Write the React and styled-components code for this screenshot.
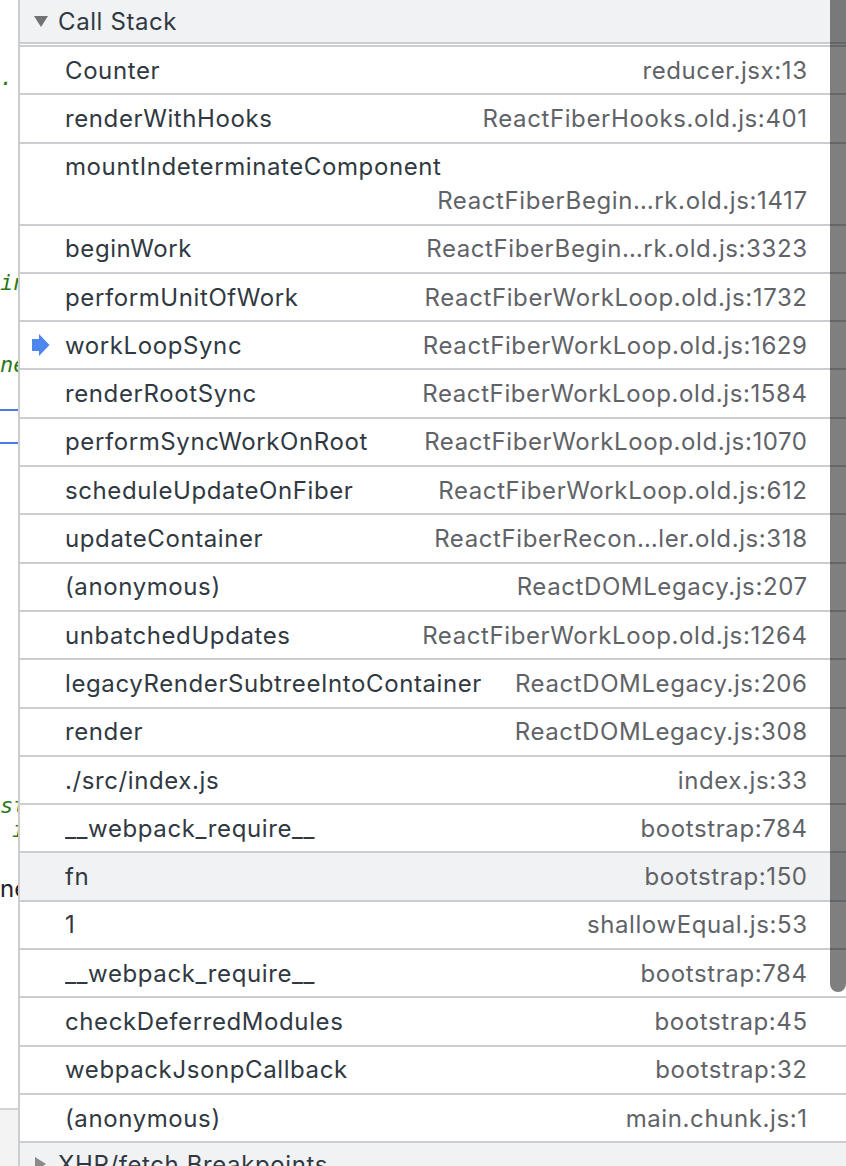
import styled, { createGlobalStyle } from 'styled-components';

const GlobalStyle = createGlobalStyle`
  html, body {
    margin: 0;
    padding: 0;
    background: #ffffff;
    overflow: hidden;
  }
  body {
    font-family: Inter, "Liberation Sans", sans-serif;
  }
`;

const frames = [
  { name: 'Counter', loc: 'reducer.jsx:13' },
  { name: 'renderWithHooks', loc: 'ReactFiberHooks.old.js:401' },
  { name: 'mountIndeterminateComponent', loc: 'ReactFiberBegin…rk.old.js:1417', stacked: true },
  { name: 'beginWork', loc: 'ReactFiberBegin…rk.old.js:3323' },
  { name: 'performUnitOfWork', loc: 'ReactFiberWorkLoop.old.js:1732' },
  { name: 'workLoopSync', loc: 'ReactFiberWorkLoop.old.js:1629', current: true },
  { name: 'renderRootSync', loc: 'ReactFiberWorkLoop.old.js:1584' },
  { name: 'performSyncWorkOnRoot', loc: 'ReactFiberWorkLoop.old.js:1070' },
  { name: 'scheduleUpdateOnFiber', loc: 'ReactFiberWorkLoop.old.js:612' },
  { name: 'updateContainer', loc: 'ReactFiberRecon…ler.old.js:318' },
  { name: '(anonymous)', loc: 'ReactDOMLegacy.js:207' },
  { name: 'unbatchedUpdates', loc: 'ReactFiberWorkLoop.old.js:1264' },
  { name: 'legacyRenderSubtreeIntoContainer', loc: 'ReactDOMLegacy.js:206' },
  { name: 'render', loc: 'ReactDOMLegacy.js:308' },
  { name: './src/index.js', loc: 'index.js:33' },
  { name: '__webpack_require__', loc: 'bootstrap:784' },
  { name: 'fn', loc: 'bootstrap:150', selected: true },
  { name: '1', loc: 'shallowEqual.js:53' },
  { name: '__webpack_require__', loc: 'bootstrap:784' },
  { name: 'checkDeferredModules', loc: 'bootstrap:45' },
  { name: 'webpackJsonpCallback', loc: 'bootstrap:32' },
  { name: '(anonymous)', loc: 'main.chunk.js:1' },
];

// bits of the source editor peeking out left of the sidebar
const gutterLines = [
  { h: 66 },
  { h: 24, text: '.', tone: 'green' },
  { h: 180 },
  { h: 26, text: 'in', tone: 'green' },
  { h: 56 },
  { h: 26, text: 'ne', tone: 'green' },
  { h: 31 },
  { rule: true },
  { h: 31 },
  { rule: true },
  { h: 350 },
  { h: 24, text: 'st', tone: 'green' },
  { h: 24, text: 'i', tone: 'green', indent: 12 },
  { h: 34 },
  { h: 26, text: 'ne', tone: 'plain' },
];

const CurrentArrow = () => (
  <svg width="18" height="22" viewBox="0 0 18 22">
    <polygon points="0,5 7,5 7,0 17.5,11 7,22 7,17 0,17" fill="#4d86ee" />
  </svg>
);

const Caret = ({ open }) => (
  <svg width="14" height="14" viewBox="0 0 14 14">
    {open ? (
      <polygon points="0,2 14,2 7,13" fill="#727272" />
    ) : (
      <polygon points="1,0 12,7 1,14" fill="#8a8a8a" />
    )}
  </svg>
);

const App = () => {
  return (
    <>
      <GlobalStyle />
      <Page>
        <Gutter>
          {gutterLines.map((line, i) =>
            line.rule ? (
              <BlueRule key={i} />
            ) : (
              <CodeLine key={i} $h={line.h} $tone={line.tone} $indent={line.indent}>
                {line.text}
              </CodeLine>
            )
          )}
          <GutterFill />
          <GutterFooter />
        </Gutter>
        <Sidebar>
          <PaneHeader>
            <Caret open />
            <PaneTitle>Call Stack</PaneTitle>
          </PaneHeader>
          <FrameList>
            {frames.map((f, i) => (
              <Frame key={i} $stacked={f.stacked} $selected={f.selected}>
                <Marker>{f.current && <CurrentArrow />}</Marker>
                <FrameName $stacked={f.stacked}>{f.name}</FrameName>
                <FrameLocation $stacked={f.stacked}>{f.loc}</FrameLocation>
              </Frame>
            ))}
          </FrameList>
          <PaneHeader>
            <Caret />
            <PaneTitle>XHR/fetch Breakpoints</PaneTitle>
          </PaneHeader>
          <ScrollThumb />
        </Sidebar>
      </Page>
    </>
  );
};

const Page = styled.div`
  display: flex;
  width: 846px;
  height: 1166px;
  overflow: hidden;
  background: #ffffff;
`;

const Gutter = styled.div`
  width: 18px;
  flex-shrink: 0;
  display: flex;
  flex-direction: column;
  overflow: hidden;
`;

const CodeLine = styled.div`
  height: ${(p) => p.$h}px;
  flex-shrink: 0;
  padding-left: ${(p) => p.$indent || 0}px;
  white-space: nowrap;
  line-height: ${(p) => p.$h}px;
  font-family: ${(p) =>
    p.$tone === 'plain'
      ? 'Inter, "Liberation Sans", sans-serif'
      : '"DejaVu Sans Mono", "Liberation Mono", monospace'};
  font-style: ${(p) => (p.$tone === 'plain' ? 'normal' : 'italic')};
  font-size: ${(p) => (p.$tone === 'plain' ? 24 : 22)}px;
  color: ${(p) => (p.$tone === 'plain' ? '#202124' : '#2a7a18')};
`;

const BlueRule = styled.div`
  height: 2px;
  flex-shrink: 0;
  background: #4a7be6;
`;

const GutterFill = styled.div`
  flex: 1;
`;

const GutterFooter = styled.div`
  height: 56px;
  flex-shrink: 0;
  background: #f3f3f4;
  border-top: 2px solid #d3d4d6;
`;

const Sidebar = styled.div`
  position: relative;
  flex: 1;
  display: flex;
  flex-direction: column;
  border-left: 2px solid #cbcdd1;
  color: #303942;
  overflow: hidden;
  letter-spacing: 0.6px;
`;

const PaneHeader = styled.div`
  height: 42px;
  flex-shrink: 0;
  display: flex;
  align-items: center;
  gap: 10px;
  padding-left: 14px;
  background: #f1f2f4;
  border-bottom: 2px solid #cbcdd1;
`;

const PaneTitle = styled.span`
  font-size: 24px;
  color: #303942;
  white-space: nowrap;
`;

const FrameList = styled.div`
  margin-top: 1px;
  border-top: 2px solid #cbcdd1;
  display: flex;
  flex-direction: column;
`;

const Frame = styled.div`
  box-sizing: border-box;
  flex-shrink: 0;
  height: ${(p) => (p.$stacked ? '82px' : '48.3px')};
  display: grid;
  grid-template-columns: 45px 1fr auto;
  grid-template-rows: ${(p) => (p.$stacked ? '34px 34px' : '1fr')};
  align-content: center;
  align-items: center;
  padding-right: 39px;
  border-bottom: 2px solid #cbcdd1;
  background: ${(p) => (p.$selected ? '#f1f2f4' : '#ffffff')};
  font-size: 24px;
`;

const Marker = styled.div`
  grid-column: 1;
  grid-row: 1;
  display: flex;
  align-items: center;
  padding-left: 12px;
`;

const FrameName = styled.div`
  grid-column: ${(p) => (p.$stacked ? '2 / 4' : '2')};
  grid-row: 1;
  white-space: nowrap;
  overflow: hidden;
  color: #303942;
`;

const FrameLocation = styled.div`
  grid-column: ${(p) => (p.$stacked ? '2 / 4' : '3')};
  grid-row: ${(p) => (p.$stacked ? 2 : 1)};
  justify-self: end;
  white-space: nowrap;
  padding-left: 16px;
  margin-right: -0.6px;
  color: #5f6368;
`;

const ScrollThumb = styled.div`
  position: absolute;
  top: 0;
  right: 0;
  width: 16px;
  height: 992px;
  background: rgba(0, 0, 0, 0.5);
  border-radius: 0 0 8px 8px;
`;

export default App;
